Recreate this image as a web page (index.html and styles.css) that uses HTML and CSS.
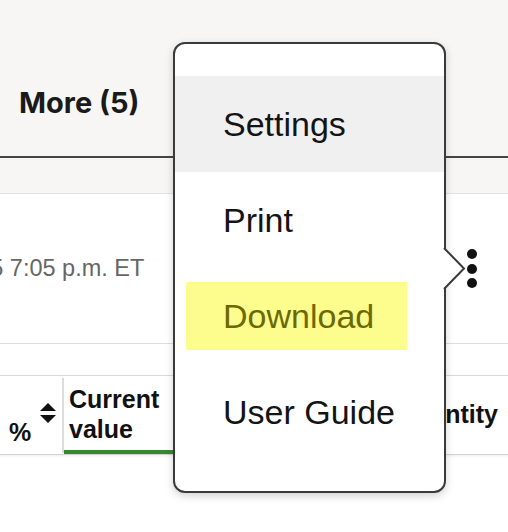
FILE: index.html
```html
<!DOCTYPE html>
<html lang="en">
<head>
<meta charset="utf-8">
<title>Portfolio menu</title>
<link rel="stylesheet" href="styles.css">
</head>
<body>
<div class="page">
  <nav class="tabs">
    <div class="tab">More (5)</div>
  </nav>
  <div class="band"></div>
  <section class="card">
    <span class="timestamp">2025 7:05 p.m. ET</span>
    <button class="kebab" aria-label="More options">
      <span class="dot"></span><span class="dot"></span><span class="dot"></span>
    </button>
  </section>
  <div class="spacer-row"></div>
  <div class="thead">
    <div class="th th-pct">
      <span class="pct">%</span>
      <svg class="sort" viewBox="0 0 16 20" width="16" height="20" aria-hidden="true">
        <polygon points="8,0 16,8 0,8" fill="#111"/>
        <polygon points="0,12 16,12 8,20" fill="#111"/>
      </svg>
    </div>
    <div class="th th-value">Current<br>value</div>
    <div class="th th-qty">Quantity</div>
  </div>

  <div class="menu" role="menu">
    <div class="item item-active" role="menuitem">Settings</div>
    <div class="item" role="menuitem">Print</div>
    <div class="item item-mark" role="menuitem"><span class="mark">Download</span></div>
    <div class="item" role="menuitem">User Guide</div>
    <svg class="menu-arrow" viewBox="0 0 24 42" width="24" height="42" aria-hidden="true">
      <polygon points="0,0 21,20.5 0,41" fill="#fff"/>
      <polyline points="1,0 21,20.5 1,41" fill="none" stroke="#3a3a3a" stroke-width="2"/>
    </svg>
  </div>
</div>
</body>
</html>
```

FILE: styles.css
```css
html, body {
  margin: 0;
  padding: 0;
  background: #ffffff;
}

body {
  font-family: "Liberation Sans", Arial, sans-serif;
  color: #111;
  width: 508px;
  height: 532px;
  overflow: hidden;
}

.page {
  position: relative;
  width: 508px;
  height: 532px;
  overflow: hidden;
}

.tabs {
  background: #f7f6f5;
  border-bottom: 2px solid #454545;
  display: flex;
  align-items: center;
  padding-top: 50px;
  box-sizing: border-box;
  height: 158px;
}

.tab {
  font-family: Inter, "Liberation Sans", sans-serif;
  font-weight: 700;
  font-size: 29px;
  letter-spacing: 0;
  color: #1a1a1a;
  padding-left: 19px;
  padding-bottom: 2px;
}

.band {
  height: 35px;
  background: #f7f6f5;
  border-bottom: 1px solid #e3e3e3;
}

.card {
  height: 149px;
  border-bottom: 1px solid #dedede;
  display: flex;
  align-items: center;
  justify-content: space-between;
  overflow: hidden;
}

.timestamp {
  font-size: 23.5px;
  color: #666;
  white-space: nowrap;
  margin-left: -49px;
}

.kebab {
  border: 0;
  background: transparent;
  padding: 0;
  margin-right: 31px;
  display: flex;
  flex-direction: column;
  gap: 4.5px;
}

.dot {
  width: 10px;
  height: 10px;
  border-radius: 50%;
  background: #111;
}

.spacer-row {
  height: 31px;
  border-bottom: 1px solid #dcdcdc;
}

.thead {
  height: 78px;
  display: flex;
  border-bottom: 1px solid #d2d2d2;
  box-shadow: 0 1px 3px rgba(0, 0, 0, 0.08);
}

.th {
  font-weight: 700;
  font-size: 25px;
  line-height: 30px;
  color: #111;
  box-sizing: border-box;
}

.th-pct {
  width: 64px;
  border-right: 2px solid #dcdcdc;
  margin: 2px 0 1px;
  display: flex;
  align-items: flex-end;
  padding-bottom: 6px;
}

.pct {
  margin-left: 9px;
}

.sort {
  align-self: center;
  margin-left: 9px;
  margin-top: 1px;
}

.th-value {
  width: 160px;
  padding: 8px 0 6px 5px;
  border-bottom: 4px solid #35862f;
  display: flex;
  flex-direction: column;
  justify-content: flex-end;
}

.th-qty {
  flex: 1;
  text-align: right;
  padding-right: 10px;
  align-self: center;
  padding-bottom: 2px;
}

.menu {
  position: absolute;
  left: 173px;
  top: 42px;
  width: 273px;
  height: 451px;
  box-sizing: border-box;
  border: 2px solid #3a3a3a;
  border-radius: 12px;
  background: #fff;
  box-shadow: 0 3px 8px rgba(0, 0, 0, 0.18);
  padding: 32px 0 31px;
}

.item {
  height: 96px;
  display: flex;
  align-items: center;
  padding-left: 48px;
  font-size: 34px;
  color: #141414;
}

.item-active {
  background: #f0f0f0;
}

.item.item-mark {
  padding-left: 11px;
}

.mark {
  display: inline-block;
  background: #fdfd8d;
  color: #6b6a00;
  height: 68px;
  line-height: 68px;
  padding: 0 33px 0 37px;
}

.menu-arrow {
  position: absolute;
  left: 100%;
  top: 204px;
  margin-left: -1px;
}
```
